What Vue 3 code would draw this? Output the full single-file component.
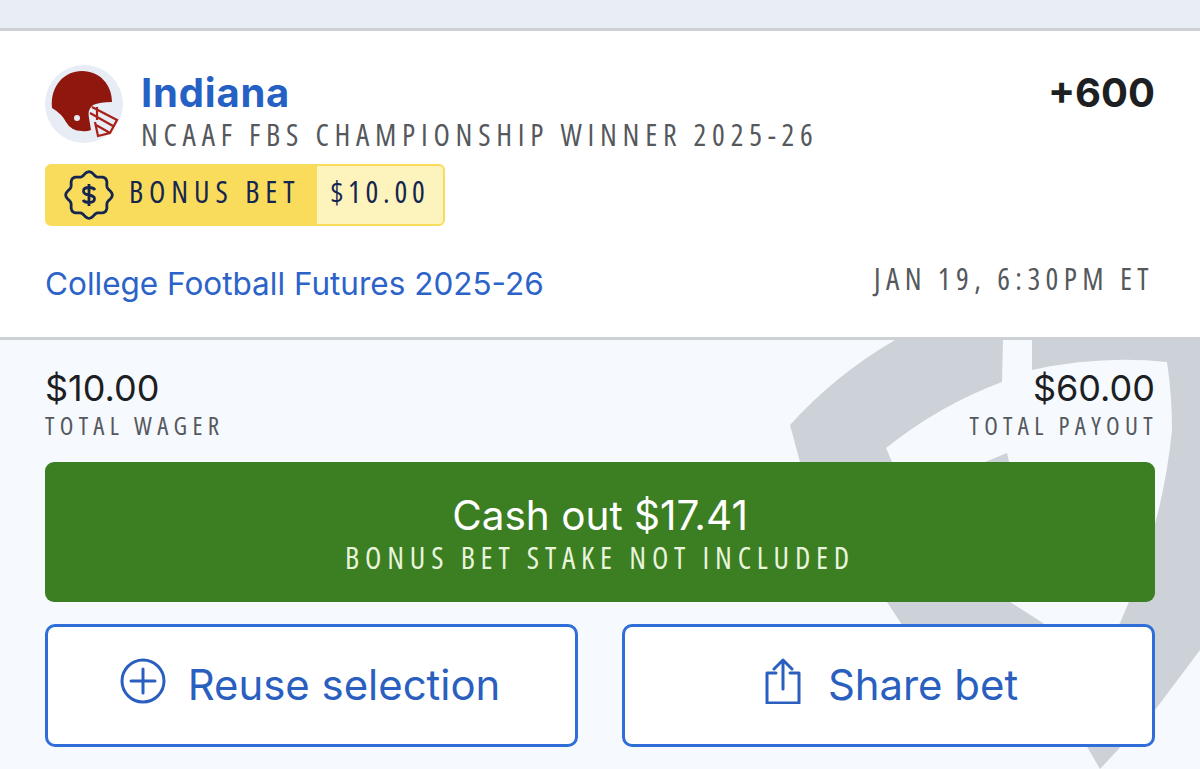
<script setup>
const totals = [
  { value: '$10.00', label: 'TOTAL WAGER' },
  { value: '$60.00', label: 'TOTAL PAYOUT' },
];

// wavy seal round the dollar sign
const sealPath = Array.from({ length: 96 }, (_, i) => {
  const a = (i / 96) * Math.PI * 2;
  const r = 21.5 + 1.8 * Math.cos(a * 8);
  const x = 25 + r * Math.sin(a);
  const y = 25 - r * Math.cos(a);
  return (i === 0 ? 'M' : 'L') + x.toFixed(1) + ' ' + y.toFixed(1);
}).join(' ') + ' Z';
</script>

<template>
  <div class="page">
    <div class="topband"></div>

    <section class="card">
      <div class="head">
        <div class="logo">
          <svg width="78" height="78" viewBox="45 65 78 78">
            <path class="mask" d="M92 107 L117 120 L110 133 L98 136 L95 122 M90 113 L113 126 M96 125 L110 133 M97 107 L97 120" />
            <path class="shell" d="M52 108 C50 85 65 71 82 71 C100 71 112 85 112 102 Q100 102 93 105 Q87 110 89 118 L91 130 Q86 132 82 131 Q71 131 66 122 Q62 114 52 108 Z" />
            <circle cx="77" cy="118" r="3" fill="#e8ecf4" />
          </svg>
        </div>
        <div class="titles">
          <div class="team">Indiana</div>
          <div class="market">NCAAF FBS CHAMPIONSHIP WINNER 2025-26</div>
        </div>
        <div class="odds">+600</div>
      </div>

      <div class="badge">
        <div class="badge-left">
          <svg width="50" height="50" viewBox="0 0 50 50">
            <path class="seal" :d="sealPath" />
            <path class="dollar" d="M31 20 Q29.500 17.500 25 17.500 Q19.500 17.500 19.500 21.200 Q19.500 24 25 25 Q30.500 26 30.500 28.800 Q30.500 32.500 25 32.500 Q20.500 32.500 19 30 M25 14 V36" />
          </svg>
          <span>BONUS BET</span>
        </div>
        <div class="badge-right"><span>$10.00</span></div>
      </div>

      <div class="foot">
        <span class="link">College Football Futures 2025-26</span>
        <span class="date">JAN 19, 6:30PM ET</span>
      </div>
    </section>

    <section class="lower">
      <svg class="watermark" width="1200" height="769" viewBox="0 0 1200 769">
        <path d="M790 425 Q835 375 895 340 H1003 L1002 382 Q940 405 886 448 L892 462 L985 462 L1007 453 L1009 462 L1010 602 L1043 623 L1100 700 L912 640 L887 602 L800 462 Z" />
        <path d="M1032 340 H1200 V650 L1155 710 L1100 769 L1060 700 L1120 623 Q1162 530 1172 430 Q1172 395 1167 362 Q1100 355 1032 370 Z" />
      </svg>

      <div class="totals">
        <div v-for="(t, i) in totals" :key="t.label" class="total" :class="{ right: i === 1 }">
          <div class="amount">{{ t.value }}</div>
          <div class="label">{{ t.label }}</div>
        </div>
      </div>

      <div class="cashout">
        <div class="cash-main">Cash out $17.41</div>
        <div class="cash-sub">BONUS BET STAKE NOT INCLUDED</div>
      </div>

      <div class="actions">
        <div class="action reuse">
          <svg width="46" height="46" viewBox="0 0 46 46">
            <circle cx="23" cy="23" r="21" />
            <path d="M23 11 V35 M11 23 H35" />
          </svg>
          <span>Reuse selection</span>
        </div>
        <div class="action share">
          <svg width="36" height="46" viewBox="0 0 36 46">
            <path d="M11 15 H2 V45 H34 V15 H25 M18 31 V2 M9 11 L18 2 L27 11" />
          </svg>
          <span>Share bet</span>
        </div>
      </div>
    </section>
  </div>
</template>

<style scoped>
.page {
  width: 1200px;
  height: 769px;
  overflow: hidden;
  display: flex;
  flex-direction: column;
  font-family: "Inter", "Liberation Sans", sans-serif;
  background: #f6f9fe;
}
.topband {
  height: 28px;
  background: #e9edf5;
  border-bottom: 3px solid #cdd1d6;
}
.card {
  height: 309px;
  box-sizing: border-box;
  background: #fff;
  border-bottom: 3px solid #cdd1d6;
  padding: 34px 45px 0;
}
.head {
  display: flex;
  align-items: flex-start;
  height: 99px;
}
.logo {
  width: 78px;
  height: 78px;
  border-radius: 50%;
  background: #e8ecf4;
  margin-right: 18px;
  flex: none;
}
.logo svg {
  display: block;
}
.shell {
  fill: #8f170d;
}
.mask {
  fill: none;
  stroke: #a81f15;
  stroke-width: 2.2;
}
.titles {
  flex: 1;
}
.team {
  font-size: 40px;
  font-weight: 700;
  letter-spacing: 0.8px;
  line-height: 56px;
  color: #2560c4;
}
.market {
  font-family: "Open Sans", sans-serif;
  font-stretch: 75%;
  font-size: 30px;
  line-height: 30px;
  letter-spacing: 5.75px;
  margin-top: -1px;
  color: #55585c;
  white-space: nowrap;
}
.odds {
  font-size: 40px;
  font-weight: 700;
  line-height: 56px;
  color: #1d1f22;
}
.badge {
  width: 400px;
  height: 62px;
  box-sizing: border-box;
  border: 2px solid #fadc5c;
  border-radius: 6px;
  background: #fadc5c;
  display: flex;
  overflow: hidden;
  color: #14264f;
  font-family: "Open Sans", sans-serif;
  font-stretch: 75%;
  font-size: 30px;
  letter-spacing: 5.9px;
  white-space: nowrap;
}
.badge span {
  margin-top: -7px;
}
.badge-left {
  width: 270px;
  display: flex;
  align-items: center;
  gap: 15px;
  padding-left: 17px;
  box-sizing: border-box;
}
.seal,
.dollar {
  fill: none;
  stroke: #14264f;
  stroke-width: 2.8;
  stroke-linejoin: round;
}
.badge-right {
  flex: 1;
  background: #fdf3bd;
  display: flex;
  align-items: center;
  justify-content: center;
  letter-spacing: 4.8px;
}
.foot {
  display: flex;
  justify-content: space-between;
  align-items: center;
  margin-top: 38px;
}
.link {
  font-size: 31.5px;
  color: #2b63c8;
}
.date {
  font-family: "Open Sans", sans-serif;
  font-stretch: 75%;
  font-size: 30px;
  line-height: 40px;
  letter-spacing: 5.4px;
  color: #55585c;
  margin-top: -10px;
  margin-right: 1px;
}
.lower {
  flex: 1;
  position: relative;
  padding: 27px 45px 0;
}
.watermark {
  position: absolute;
  left: 0;
  top: -340px;
  fill: #cdd2d9;
}
.totals {
  position: relative;
  display: flex;
  justify-content: space-between;
  height: 95px;
}
.amount {
  font-size: 36px;
  line-height: 42px;
  color: #1d1f22;
}
.label {
  font-family: "Open Sans", sans-serif;
  font-stretch: 75%;
  font-size: 25px;
  line-height: 32px;
  letter-spacing: 5.3px;
  color: #55585c;
}
.total.right {
  text-align: right;
}
.total.right .label {
  margin-right: -3px;
}
.cashout {
  position: relative;
  height: 140px;
  box-sizing: border-box;
  padding-top: 29px;
  border-radius: 9px;
  background: #3c7e22;
  color: #fff;
  text-align: center;
}
.cash-main {
  font-size: 40.5px;
  line-height: 50px;
}
.cash-sub {
  font-family: "Open Sans", sans-serif;
  font-stretch: 75%;
  font-size: 30px;
  line-height: 34px;
  letter-spacing: 5.8px;
  color: #e8f4dc;
}
.actions {
  position: relative;
  display: flex;
  justify-content: space-between;
  margin-top: 22px;
}
.action {
  width: 533px;
  height: 123px;
  box-sizing: border-box;
  border: 3px solid #2f6ed8;
  border-radius: 10px;
  background: #fff;
  display: flex;
  align-items: center;
  justify-content: center;
  font-size: 41.9px;
  line-height: 50px;
  color: #2a5fbf;
}
.action span {
  margin-top: -2px;
}
.reuse {
  gap: 22px;
  padding-right: 3px;
}
.share {
  gap: 27px;
  padding-left: 6px;
}
.action svg {
  fill: none;
  stroke: #2a5fbf;
  stroke-width: 3;
  stroke-linecap: round;
  stroke-linejoin: round;
  margin-top: -10px;
}
</style>

<style>
body {
  margin: 0;
  background: #f6f9fe;
}
</style>
